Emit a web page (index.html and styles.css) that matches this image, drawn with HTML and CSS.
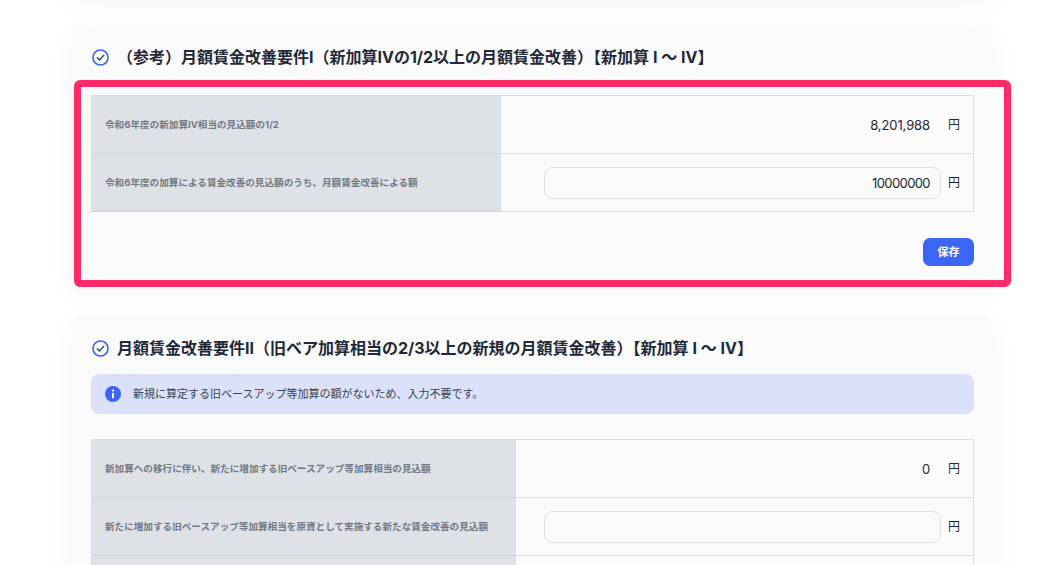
FILE: index.html
```html
<!DOCTYPE html>
<html lang="ja">
<head>
<meta charset="utf-8">
<title>月額賃金改善要件</title>
<link rel="stylesheet" href="styles.css">
</head>
<body>
<main class="page">
  <div class="card card-stub"></div>

  <section class="card">
    <h2 class="card-title">
      <svg class="check-icon" viewBox="0 0 16 16" aria-hidden="true"><circle cx="8" cy="8" r="7.1" fill="none" stroke="#3b66f5" stroke-width="1.5"/><path d="M5 8.2l2.1 2.1L11 6" fill="none" stroke="#34466f" stroke-width="1.4" stroke-linecap="round" stroke-linejoin="round"/></svg>
      <span>（参考）月額賃金改善要件I（新加算IVの1/2以上の月額賃金改善）【新加算 I 〜 IV】</span>
    </h2>
    <div class="data-table table-narrow">
      <div class="row">
        <div class="label"><span class="label-text">令和6年度の新加算IV相当の見込額の1/2</span></div>
        <div class="value"><span class="amount">8,201,988</span><span class="unit">円</span></div>
      </div>
      <div class="row">
        <div class="label"><span class="label-text">令和6年度の加算による賃金改善の見込額のうち、月額賃金改善による額</span></div>
        <div class="value"><input class="field" type="text" value="10000000"><span class="unit">円</span></div>
      </div>
    </div>
    <div class="actions"><button class="save" type="button">保存</button></div>
  </section>

  <section class="card">
    <h2 class="card-title">
      <svg class="check-icon" viewBox="0 0 16 16" aria-hidden="true"><circle cx="8" cy="8" r="7.1" fill="none" stroke="#3b66f5" stroke-width="1.5"/><path d="M5 8.2l2.1 2.1L11 6" fill="none" stroke="#34466f" stroke-width="1.4" stroke-linecap="round" stroke-linejoin="round"/></svg>
      <span>月額賃金改善要件II（旧ベア加算相当の2/3以上の新規の月額賃金改善）【新加算 I 〜 IV】</span>
    </h2>
    <div class="notice">
      <svg class="info-icon" viewBox="0 0 16 16" aria-hidden="true"><circle cx="8" cy="8" r="8" fill="#3b66f5"/><circle cx="8" cy="4.6" r="1.1" fill="#fff"/><rect x="7" y="6.8" width="2" height="5.4" rx=".4" fill="#fff"/></svg>
      <span class="notice-text">新規に算定する旧ベースアップ等加算の額がないため、入力不要です。</span>
    </div>
    <div class="data-table table-wide">
      <div class="row">
        <div class="label"><span class="label-text">新加算への移行に伴い、新たに増加する旧ベースアップ等加算相当の見込額</span></div>
        <div class="value"><span class="amount">0</span><span class="unit">円</span></div>
      </div>
      <div class="row">
        <div class="label"><span class="label-text">新たに増加する旧ベースアップ等加算相当を原資として実施する新たな賃金改善の見込額</span></div>
        <div class="value"><input class="field" type="text" value=""><span class="unit">円</span></div>
      </div>
      <div class="row">
        <div class="label"></div>
        <div class="value"></div>
      </div>
    </div>
  </section>

  <div class="highlight"></div>
</main>
</body>
</html>
```
FILE: styles.css
```css
* { box-sizing: border-box; }
html, body { margin: 0; height: 565px; overflow: hidden; background: #fff; }
body {
  font-family: Inter, "Noto Sans CJK JP", "Noto Sans", sans-serif;
  color: #1f2937;
}
.page {
  position: relative;
  height: 565px;
  padding: 0 58px 0 71px;
  display: flex;
  flex-direction: column;
  gap: 30px;
  overflow: hidden;
}
.card {
  flex: none;
  background: #fafafa;
  border-radius: 14px;
  padding: 20px;
  box-shadow: 0 8px 24px rgba(30, 40, 70, 0.05);
}
.card-stub { height: 30px; margin-top: -35px; padding: 0; }
.card-title {
  margin: 0;
  height: 24px;
  display: flex;
  align-items: center;
  gap: 8px;
  font-size: 16px;
  line-height: 24px;
  font-weight: 700;
  color: #1f2937;
}
.check-icon { width: 17px; height: 17px; flex: none; margin-left: 1px; }
.data-table { margin-top: 26px; border: 1px solid #dcdee2; border-bottom: 0; }
.table-narrow { margin-top: 26px; }
.table-wide { margin-top: 25px; }
.row { display: grid; height: 58px; border-bottom: 1px solid #dcdee2; }
.table-narrow .row { grid-template-columns: 409px 1fr; }
.table-wide .row { grid-template-columns: 424px 1fr; }
.label {
  display: flex;
  align-items: center;
  padding-left: 13px;
  background: #dee1e6;
  font-size: 9.6px;
  font-weight: 700;
  color: #727984;
  margin-bottom: -1px;
  border-bottom: 1px solid #cfd2d8;
}
.label-text { padding-bottom: 2px; }
.value {
  display: flex;
  align-items: center;
  justify-content: flex-end;
  padding-right: 13px;
  font-size: 13px;
}
.amount { line-height: 20px; letter-spacing: -0.1px; }
.unit { margin-left: 18px; font-size: 12px; line-height: 20px; }
.field {
  width: 397px;
  height: 32px;
  border: 1px solid #dee0e6;
  border-radius: 8px;
  background: transparent;
  padding: 0 10px;
  text-align: right;
  font: 13px Inter, "Noto Sans CJK JP", sans-serif;
  letter-spacing: -0.6px;
  color: #1f2937;
}
.field + .unit { margin-left: 7px; }
.actions { display: flex; justify-content: flex-end; margin-top: 26px; }
.save {
  width: 51px;
  height: 28px;
  border: 0;
  border-radius: 7px;
  padding: 0 0 2px;
  background: #3b66f5;
  color: #fff;
  font: 700 11px Inter, "Noto Sans CJK JP", sans-serif;
}
.notice {
  margin-top: 14px;
  height: 40px;
  display: flex;
  align-items: center;
  gap: 12px;
  padding-left: 14px;
  background: #dce1fa;
  border-radius: 8px;
  font-size: 11px;
  color: #374151;
}
.notice-text { padding-bottom: 2px; }
.info-icon { width: 16px; height: 16px; flex: none; }
.highlight {
  position: absolute;
  left: 74px;
  top: 80px;
  width: 937px;
  height: 207px;
  border: 7px solid #ff2a68;
  border-radius: 6px;
  pointer-events: none;
}
```
